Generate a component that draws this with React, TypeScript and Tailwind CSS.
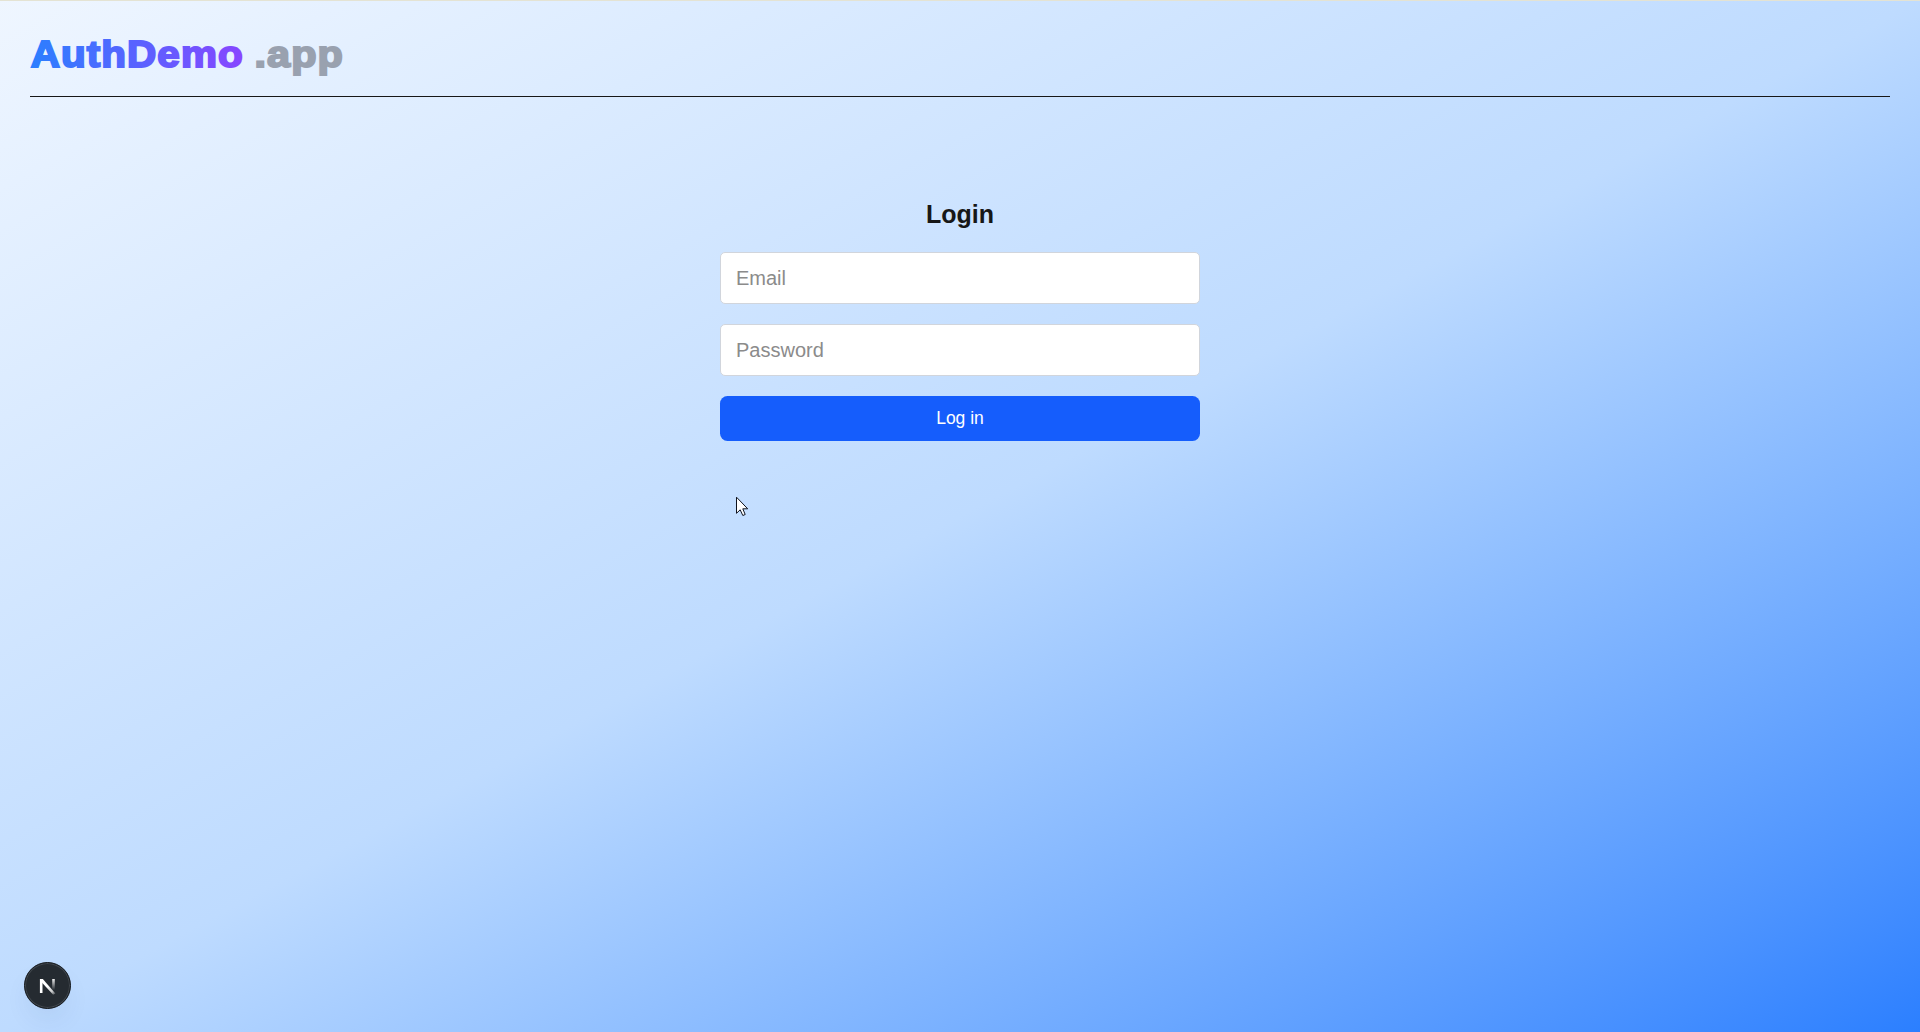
import React from "react";

function Logo() {
  return (
    <svg
      width="330"
      height="50"
      viewBox="0 0 330 50"
      className="shrink-0 text-[37.5px] font-bold tracking-[1px]"
      role="img"
      aria-label="AuthDemo .app"
    >
      <defs>
        <linearGradient id="brand" x1="0" y1="0" x2="213" y2="0" gradientUnits="userSpaceOnUse">
          <stop stopColor="#2b7fff" />
          <stop offset="1" stopColor="#8746ff" />
        </linearGradient>
      </defs>
      <text x="0.7" y="37.2" textLength="213" lengthAdjust="spacingAndGlyphs" fill="url(#brand)" stroke="url(#brand)" strokeWidth="2">
        AuthDemo
      </text>
      <text x="224.5" y="37.2" textLength="89.5" lengthAdjust="spacingAndGlyphs" fill="#99a1af" stroke="#99a1af" strokeWidth="2">
        .app
      </text>
    </svg>
  );
}

function NextBadge() {
  return (
    <div className="absolute left-[24px] top-[961px] flex h-[47px] w-[47px] items-center justify-center rounded-full border border-[#15191d] bg-[#252b31] shadow-[inset_0_0_0_1px_#41474d,0_14px_26px_-4px_rgba(30,60,110,0.08)]">
      <svg width="47" height="47" viewBox="0 0 47 47" fill="none" className="shrink-0">
        <defs>
          <linearGradient id="diagonal" x1="24" y1="24" x2="31" y2="33" gradientUnits="userSpaceOnUse">
            <stop stopColor="#fff" />
            <stop offset="0.6" stopColor="#fff" stopOpacity="0.75" />
            <stop offset="1" stopColor="#fff" stopOpacity="0.1" />
          </linearGradient>
          <linearGradient id="stem" x1="30" y1="16" x2="30" y2="28" gradientUnits="userSpaceOnUse">
            <stop stopColor="#fff" />
            <stop offset="1" stopColor="#fff" stopOpacity="0" />
          </linearGradient>
        </defs>
        <path d="M16 17H18.8L31.4 31.5L29.2 32.8L16 18.4Z" fill="url(#diagonal)" />
        <path d="M17.2 31V17" stroke="#fff" strokeWidth="2.6" />
        <path d="M29.5 17V28" stroke="url(#stem)" strokeWidth="2.6" />
      </svg>
    </div>
  );
}

function Pointer() {
  return (
    <svg className="absolute left-[736px] top-[495px]" width="14" height="21" viewBox="0 0 14 21">
      <path
        d="M0.5 1.2V17.3L4.2 13.8L6.8 19.5L9.2 18.5L6.8 12.8H11.7Z"
        fill="#fff"
        stroke="#10141f"
        strokeWidth="1"
      />
    </svg>
  );
}

const inputClass =
  "h-[52px] w-full rounded-[5px] border border-[#d1d5dc] bg-white px-[15px] text-[20px] leading-[28px] outline-none placeholder:text-[#8b8b8b]";

export default function App() {
  return (
    <div className="relative h-[1032px] w-full overflow-hidden border-t border-[#e4e3d3] bg-linear-to-br from-blue-50 via-blue-200 to-blue-500 px-[30px] font-['Liberation_Sans',Arial,sans-serif] text-[#171717]">
      <header className="flex h-[96px] items-start border-b border-[#171717] pt-[29px]">
        <Logo />
      </header>
      <main className="mx-auto flex w-[480px] flex-col pt-[101px]">
        <h2 className="text-center text-[25px] leading-[32px] font-bold">Login</h2>
        <form className="mt-[22px] flex flex-col gap-[20px]">
          <input type="email" placeholder="Email" className={inputClass} />
          <input type="password" placeholder="Password" className={inputClass} />
          <button type="button" className="h-[45px] rounded-[7.5px] bg-[#155dfc] text-[17.5px] leading-[25px] text-white">
            Log in
          </button>
        </form>
      </main>
      <Pointer />
      <NextBadge />
    </div>
  );
}
